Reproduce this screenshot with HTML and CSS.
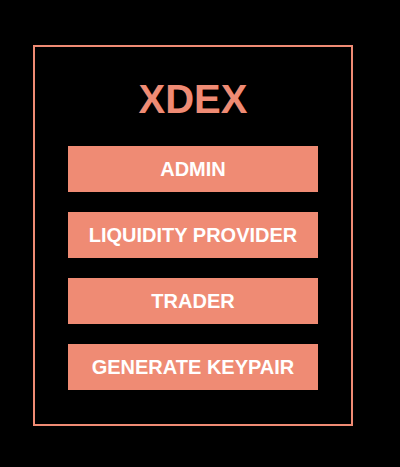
FILE: index.html
```html
<!DOCTYPE html>
<html>
<head>
<meta charset="utf-8">
<link rel="stylesheet" href="styles.css">
</head>
<body>
<div class="panel">
  <h1 class="title">XDEX</h1>
  <div class="menu">
    <button class="btn">ADMIN</button>
    <button class="btn">LIQUIDITY PROVIDER</button>
    <button class="btn">TRADER</button>
    <button class="btn">GENERATE KEYPAIR</button>
  </div>
</div>
</body>
</html>
```
FILE: styles.css
```css
html, body {
  margin: 0;
  background: #000;
}
body {
  padding: 45px 0 0 33px;
  font-family: "Liberation Sans", Arial, sans-serif;
}
.panel {
  box-sizing: border-box;
  width: 320px;
  height: 381px;
  border: 2px solid #ef8b74;
  padding: 28px 33px 0;
  display: flex;
  flex-direction: column;
  align-items: center;
}
.title {
  margin: 0;
  font-size: 40px;
  line-height: 48px;
  font-weight: bold;
  color: #ef8b74;
}
.menu {
  margin-top: 23px;
  display: flex;
  flex-direction: column;
  gap: 20px;
  width: 250px;
}
.btn {
  height: 46px;
  border: none;
  background: #ef8b74;
  color: #fff;
  font-family: "Liberation Sans", Arial, sans-serif;
  font-weight: bold;
  font-size: 20px;
  padding: 0;
}
```
